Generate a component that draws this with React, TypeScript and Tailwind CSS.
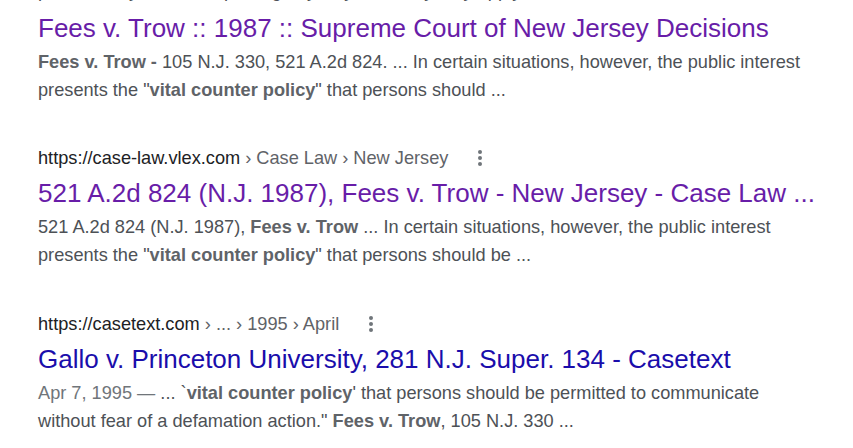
const font = { fontFamily: '"Liberation Sans", Arial, sans-serif' }

function Dots() {
    return (
        <span className="ml-[30px] inline-flex flex-col items-center gap-[2px]">
            <span className="w-[4px] h-[4px] rounded-full bg-[#70757a]" />
            <span className="w-[4px] h-[4px] rounded-full bg-[#70757a]" />
            <span className="w-[4px] h-[4px] rounded-full bg-[#70757a]" />
        </span>
    )
}

function Crumbs({ site, path }: { site: string; path: string }) {
    return (
        <div className="flex items-center h-[28px] text-[18.2px] leading-[28px]">
            <span className="text-[#202124]">{site}</span>
            <span className="text-[#5f6368] whitespace-pre">{path}</span>
            <Dots />
        </div>
    )
}

export default function App() {
    return (
        <div className="w-[853px] h-[448px] overflow-hidden bg-white pl-[38px]" style={font}>
            <div className="h-[28px] mt-[-23px] text-[18.2px] leading-[28px] text-[#4d5156] whitespace-nowrap overflow-hidden">
                protected by the ... the privilege by way of ... they may apply ...
            </div>

            {/* result 1 */}
            <div className="mt-[7px] text-[26px] leading-[32px] text-[#681da8] whitespace-nowrap">
                Fees v. Trow :: 1987 :: Supreme Court of New Jersey Decisions
            </div>
            <div className="mt-[4px] text-[18.2px] leading-[28px] text-[#4d5156] whitespace-nowrap">
                <b className="text-[#5f6368]">Fees v. Trow -</b> 105 N.J. 330, 521 A.2d 824. ... In certain situations, however, the public interest
                <br />
                presents the "<b className="text-[#5f6368]">vital counter policy</b>" that persons should ...
            </div>

            {/* result 2 */}
            <div className="mt-[40px]">
                <Crumbs site="https://case-law.vlex.com" path=" › Case Law › New Jersey" />
                <div className="mt-[5px] text-[26px] leading-[32px] text-[#681da8] whitespace-nowrap">
                    521 A.2d 824 (N.J. 1987), Fees v. Trow - New Jersey - Case Law ...
                </div>
                <div className="mt-[4px] text-[18.2px] leading-[28px] text-[#4d5156] whitespace-nowrap">
                    521 A.2d 824 (N.J. 1987), <b className="text-[#5f6368]">Fees v. Trow</b> ... In certain situations, however, the public interest
                    <br />
                    presents the "<b className="text-[#5f6368]">vital counter policy</b>" that persons should be ...
                </div>
            </div>

            {/* result 3 */}
            <div className="mt-[41px]">
                <Crumbs site="https://casetext.com" path=" › ... › 1995 › April" />
                <div className="mt-[5px] text-[26px] leading-[32px] text-[#1a0dab] whitespace-nowrap">
                    Gallo v. Princeton University, 281 N.J. Super. 134 - Casetext
                </div>
                <div className="mt-[4px] text-[18.2px] leading-[28px] text-[#4d5156] whitespace-nowrap">
                    <span className="text-[#70757a]">Apr 7, 1995 — </span>... `<b className="text-[#5f6368]">vital counter policy</b>' that persons should be permitted to communicate
                    <br />
                    without fear of a defamation action." <b className="text-[#5f6368]">Fees v. Trow</b>, 105 N.J. 330 ...
                </div>
            </div>
        </div>
    )
}
